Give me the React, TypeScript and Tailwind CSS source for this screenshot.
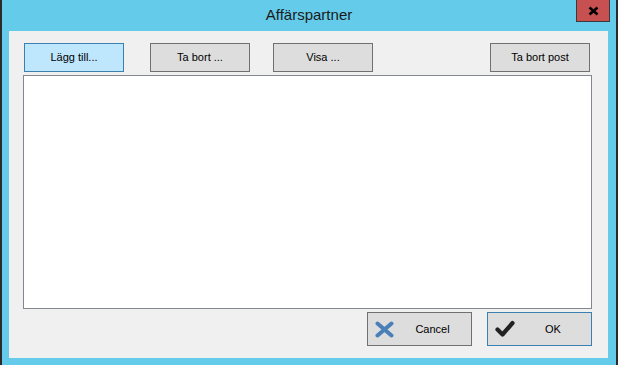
import React from "react";

function TopButton({ label, hot }: { label: string; hot?: boolean }) {
  return (
    <button
      className={
        "h-[29px] w-[100px] shrink-0 border text-[11px] text-black " +
        (hot ? "border-[#3c7fb1] bg-[#bee6fd]" : "border-[#707070] bg-[#dddddd]")
      }
    >
      {label}
    </button>
  );
}

function CancelIcon() {
  return (
    <svg width="19" height="17" viewBox="0 0 19 17">
      <path d="M2.5 2.5 L16.5 14.5 M16.5 2.5 L2.5 14.5" stroke="#4b7fb8" strokeWidth="4" strokeLinecap="round" />
    </svg>
  );
}

function CheckIcon() {
  return (
    <svg width="20" height="18" viewBox="0 0 20 18">
      <path d="M2.5 9.5 L7.5 14.5 L17.5 3" stroke="#222222" strokeWidth="4.2" fill="none" strokeLinecap="round" strokeLinejoin="round" />
    </svg>
  );
}

function App() {
  return (
    <div
      className="flex h-[365px] w-[618px] flex-col border-x-2 border-[#2b2b2b] bg-[#65cbea]"
      style={{ fontFamily: "'Liberation Sans', Arial, sans-serif" }}
    >
      <div className="relative flex h-[31px] shrink-0 items-center justify-center">
        <span className="text-[15px] text-[#1a1a1a]">Affärspartner</span>
        <button className="absolute right-[6px] top-0 flex h-[22px] w-[34px] items-center justify-center border border-t-0 border-[#3a3a3a] bg-[#c75050]">
          <svg width="11" height="10" viewBox="0 0 11 10">
            <path d="M1.5 1.5 L9.5 8.5 M9.5 1.5 L1.5 8.5" stroke="#000" strokeWidth="2.6" />
          </svg>
        </button>
      </div>
      <div className="ml-[7px] mr-[8px] mb-[7px] flex flex-1 flex-col bg-[#f0f0f0]">
        <div className="mt-[12px] flex h-[29px] pl-[15px] pr-[18px]">
          <TopButton label="Lägg till..." hot />
          <div className="ml-[26px]">
            <TopButton label="Ta bort ..." />
          </div>
          <div className="ml-[23px]">
            <TopButton label="Visa ..." />
          </div>
          <div className="ml-auto">
            <TopButton label="Ta bort post" />
          </div>
        </div>
        <div className="ml-[14px] mr-[16px] mt-[3px] h-[234px] border border-[#828790] bg-white"></div>
        <div className="mt-[3px] flex justify-end gap-[15px] pr-[16px]">
          <button className="flex h-[34px] w-[105px] items-center border border-[#707070] bg-[#dddddd] pl-[7px] text-[11px] text-black">
            <CancelIcon />
            <span className="flex-1 text-center">Cancel</span>
          </button>
          <button className="flex h-[34px] w-[105px] items-center border border-[#3c7fb1] bg-[#dddddd] pl-[7px] text-[11px] text-black">
            <CheckIcon />
            <span className="flex-1 text-center">OK</span>
          </button>
        </div>
      </div>
    </div>
  );
}

export default App;
